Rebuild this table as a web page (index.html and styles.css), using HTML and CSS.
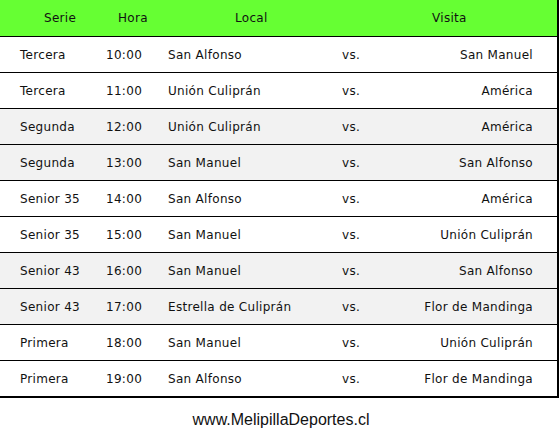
FILE: index.html
```html
<!DOCTYPE html>
<html>
<head>
<meta charset="utf-8">
<link rel="stylesheet" href="styles.css">
</head>
<body>
<div class="table">
  <div class="row head">
    <div class="c1">Serie</div><div class="c2">Hora</div><div class="c3">Local</div><div class="c4"></div><div class="c5">Visita</div>
  </div>
  <div class="row"><div class="c1">Tercera</div><div class="c2">10:00</div><div class="c3">San Alfonso</div><div class="c4">vs.</div><div class="c5">San Manuel</div></div>
  <div class="row"><div class="c1">Tercera</div><div class="c2">11:00</div><div class="c3">Unión Culiprán</div><div class="c4">vs.</div><div class="c5">América</div></div>
  <div class="row alt"><div class="c1">Segunda</div><div class="c2">12:00</div><div class="c3">Unión Culiprán</div><div class="c4">vs.</div><div class="c5">América</div></div>
  <div class="row alt"><div class="c1">Segunda</div><div class="c2">13:00</div><div class="c3">San Manuel</div><div class="c4">vs.</div><div class="c5">San Alfonso</div></div>
  <div class="row"><div class="c1">Senior 35</div><div class="c2">14:00</div><div class="c3">San Alfonso</div><div class="c4">vs.</div><div class="c5">América</div></div>
  <div class="row"><div class="c1">Senior 35</div><div class="c2">15:00</div><div class="c3">San Manuel</div><div class="c4">vs.</div><div class="c5">Unión Culiprán</div></div>
  <div class="row alt"><div class="c1">Senior 43</div><div class="c2">16:00</div><div class="c3">San Manuel</div><div class="c4">vs.</div><div class="c5">San Alfonso</div></div>
  <div class="row alt"><div class="c1">Senior 43</div><div class="c2">17:00</div><div class="c3">Estrella de Culiprán</div><div class="c4">vs.</div><div class="c5">Flor de Mandinga</div></div>
  <div class="row"><div class="c1">Primera</div><div class="c2">18:00</div><div class="c3">San Manuel</div><div class="c4">vs.</div><div class="c5">Unión Culiprán</div></div>
  <div class="row last"><div class="c1">Primera</div><div class="c2">19:00</div><div class="c3">San Alfonso</div><div class="c4">vs.</div><div class="c5">Flor de Mandinga</div></div>
</div>
<div class="footer">www.MelipillaDeportes.cl</div>
</body>
</html>
```
FILE: styles.css
```css
html, body {
  margin: 0;
  padding: 0;
  background: #ffffff;
}
body {
  font-family: "DejaVu Sans", Verdana, sans-serif;
  font-size: 12px;
  letter-spacing: 0.3px;
  color: #111;
}
.table {
  width: 557px;
  border-right: 2px solid #000;
}
.row {
  display: grid;
  grid-template-columns: 100px 60px 170px 40px 1fr;
  align-items: center;
  height: 35px;
  border-bottom: 1px solid #000;
  background: #fff;
}
.row.alt {
  background: #f2f2f2;
}
.row.last {
  border-bottom: 2px solid #000;
}
.row.head {
  height: 36px;
  background: #66ff33;
}
.c1 { padding-left: 20px; }
.c2 { padding-left: 6px; }
.c3 { padding-left: 8px; }
.c4 { padding-left: 12px; }
.c5 { text-align: right; padding-right: 24px; }
.head .c1 { padding-left: 44px; }
.head .c2 { padding-left: 18px; }
.head .c3 { padding-left: 75px; }
.head .c5 { text-align: left; padding-left: 62px; padding-right: 0; }
.footer {
  font-family: "Liberation Sans", Arial, sans-serif;
  font-size: 16px;
  letter-spacing: 0;
  text-align: center;
  padding-top: 13px;
  padding-left: 2px;
  color: #111;
}
```
